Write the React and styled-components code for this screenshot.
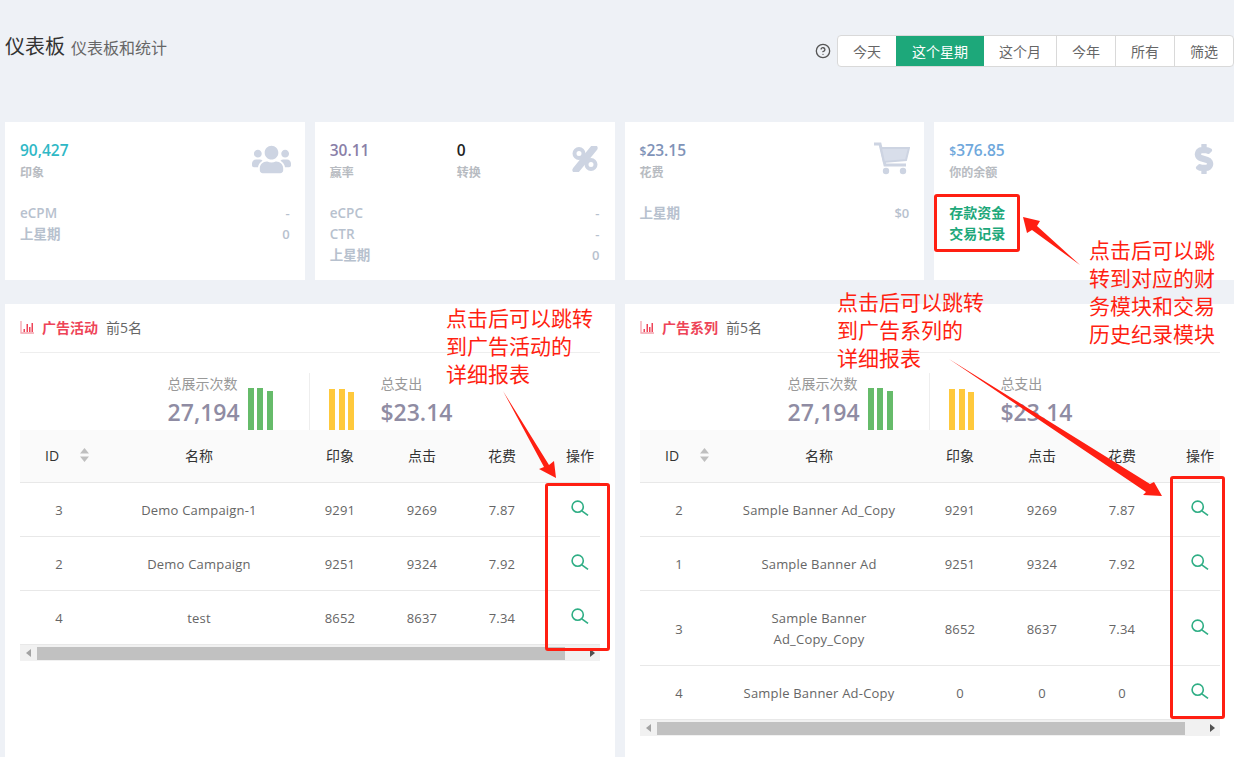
import React from 'react';
import styled, { createGlobalStyle } from 'styled-components';
import { FaUsers, FaDollarSign } from 'react-icons/fa';

const GlobalStyle = createGlobalStyle`
    html, body {
        margin: 0;
        padding: 0;
        background: #eef1f6;
    }
    body {
        font-family: "Open Sans", "Noto Sans CJK SC", sans-serif;
        font-size: 13px;
        color: #666;
    }
`;

const Page = styled.div`
    position: relative;
    box-sizing: border-box;
    width: 1234px;
    height: 757px;
    padding-left: 5px;
    overflow: hidden;
    background: #eef1f6;
`;

const PageHead = styled.div`
    display: flex;
    align-items: flex-start;
    justify-content: space-between;
    height: 32px;
    padding-top: 35px;
    margin-bottom: 55px;
`;

const Title = styled.h1`
    margin: 0;
    font-size: 20px;
    font-weight: 400;
    color: #333;
    line-height: 24px;
`;

const SubTitle = styled.small`
    margin-left: 6px;
    font-size: 16px;
    color: #666;
`;

const RangeBar = styled.div`
    display: flex;
    align-items: center;
`;

const HelpIcon = styled.svg`
    width: 16px;
    height: 16px;
    margin-right: 6px;
    color: #555;
`;

const RangeGroup = styled.div`
    display: flex;
    height: 32px;
    box-sizing: border-box;
    border: 1px solid #d9d9d9;
    border-radius: 4px;
    background: #fff;
    overflow: hidden;
`;

const RangeButton = styled.div`
    display: flex;
    align-items: center;
    justify-content: center;
    box-sizing: border-box;
    width: ${p => p.$width}px;
    margin-top: -1px;
    margin-bottom: -1px;
    font-size: 14px;
    color: ${p => (p.$active ? '#fff' : '#666')};
    background: ${p => (p.$active ? '#1da87a' : 'transparent')};
    border-left: ${p => (p.$divided ? '1px solid #d9d9d9' : 'none')};
`;

const CardRow = styled.div`
    display: grid;
    grid-template-columns: repeat(4, 1fr);
    gap: 10px;
    margin-bottom: 24px;
`;

const Card = styled.div`
    position: relative;
    box-sizing: border-box;
    height: 158px;
    padding: 18px 15px 0;
    background: #fff;
`;

const CardIcon = styled.div`
    position: absolute;
    top: ${p => p.$top}px;
    right: ${p => p.$right}px;
    display: flex;
    color: #cdd4e2;
`;

const MetricRow = styled.div`
    display: flex;
    height: 44px;
    margin-bottom: 19px;
`;

const Metric = styled.div`
    width: 127px;
`;

const MetricValue = styled.div`
    height: 22px;
    overflow: visible;
    font-size: 15.5px;
    font-weight: 600;
    line-height: 20px;
    color: ${p => p.$color};
`;

const Currency = styled.span`
    font-size: 12px;
`;

const MetricLabel = styled.div`
    font-size: 12px;
    font-weight: 700;
    line-height: 22px;
    color: #b7bbc1;
`;

const InfoRow = styled.div`
    display: flex;
    justify-content: space-between;
    font-size: 13px;
    font-weight: 600;
    line-height: 21px;
    color: #b7c1ce;
`;

const InfoLabel = styled.span`
    font-size: 13.5px;
`;

const CardLinks = styled.div`
    margin-top: -1px;
`;

const CardLink = styled.div`
    font-size: 14px;
    font-weight: 700;
    line-height: 21px;
    color: #1da87a;
`;

const PanelRow = styled.div`
    display: grid;
    grid-template-columns: repeat(2, 1fr);
    gap: 10px;
`;

const Panel = styled.div`
    box-sizing: border-box;
    height: 460px;
    padding: 0 15px;
    background: #fff;
`;

const PanelHead = styled.div`
    display: flex;
    align-items: center;
    height: 46px;
    padding-bottom: 2px;
    border-bottom: 1px solid #eee;
`;

const PanelIcon = styled.svg`
    width: 14px;
    height: 13px;
    margin-right: 8px;
`;

const PanelTitle = styled.span`
    font-size: 14px;
    font-weight: 700;
    color: #ee4458;
`;

const PanelNote = styled.span`
    margin-left: 8px;
    font-size: 14px;
    color: #666;
`;

const StatRow = styled.div`
    display: flex;
    height: 57px;
    margin-top: 20px;
`;

const StatLeft = styled.div`
    display: flex;
    align-items: flex-end;
    justify-content: flex-end;
    box-sizing: border-box;
    width: 290px;
    padding-right: 36px;
    gap: 8px;
    border-right: 1px solid #eee;
`;

const StatRight = styled.div`
    display: flex;
    align-items: flex-end;
    padding-left: 19px;
    gap: 26px;
`;

const StatText = styled.div`
    display: flex;
    flex-direction: column;
`;

const StatLabel = styled.span`
    font-size: 14px;
    line-height: 22px;
    color: #999;
`;

const StatValue = styled.span`
    font-size: 23px;
    font-weight: 600;
    line-height: 35px;
    color: #8f8ca3;
`;

const Bars = styled.div`
    display: flex;
    align-items: flex-end;
    gap: 3.7px;
`;

const Bar = styled.div`
    width: 6px;
    height: ${p => p.$height}px;
    background: ${p => p.$color};
`;

const TableWrap = styled.div`
    width: 580px;
    overflow: hidden;
`;

const Table = styled.table`
    width: 600px;
    table-layout: fixed;
    border-collapse: separate;
    border-spacing: 0;
`;

const HeadCell = styled.th`
    height: 50px;
    padding: 0 0 2px;
    font-size: 14px;
    font-weight: 400;
    color: #333;
    text-align: center;
    background: #fafafa;
    border-bottom: 1px solid #e8e8e8;
`;

const IdHead = styled.div`
    display: flex;
    align-items: center;
    padding-left: 25px;
    gap: 21px;
`;

const SortIcon = styled.svg`
    width: 9px;
    height: 14px;
`;

const Cell = styled.td`
    padding: 17px 20px 15px;
    font-size: 13px;
    line-height: 21px;
    letter-spacing: 0.2px;
    color: #666;
    text-align: center;
    border-bottom: 1px solid #e8e8e8;
`;

const SearchIcon = styled.svg`
    display: block;
    width: 18px;
    height: 16px;
    margin: 0 auto 5px;
`;

const ScrollBar = styled.div`
    display: flex;
    align-items: center;
    height: 16px;
    background: #f1f1f1;
`;

const ScrollThumb = styled.div`
    width: 528px;
    height: 13px;
    margin-left: 17px;
    background: #c1c1c1;
`;

const ScrollArrow = styled.div`
    position: relative;
    flex: 1;
    height: 16px;
    &::after {
        content: "";
        position: absolute;
        top: 4px;
        right: 5px;
        border-style: solid;
        border-width: 4px 0 4px 5px;
        border-color: transparent transparent transparent #505050;
    }
`;

const ScrollBack = styled.div`
    width: 0;
    position: relative;
    &::after {
        content: "";
        position: absolute;
        top: -4px;
        left: 6px;
        border-style: solid;
        border-width: 4px 5px 4px 0;
        border-color: transparent #a3a3a3 transparent transparent;
    }
`;

const ArrowLayer = styled.svg`
    position: absolute;
    top: 0;
    left: 0;
    width: 1234px;
    height: 757px;
    pointer-events: none;
`;

const MarkBox = styled.div`
    position: absolute;
    box-sizing: border-box;
    left: ${p => p.$x}px;
    top: ${p => p.$y}px;
    width: ${p => p.$w}px;
    height: ${p => p.$h}px;
    border: 3px solid #ff1f12;
    border-radius: 3px;
`;

const MarkNote = styled.div`
    position: absolute;
    left: ${p => p.$x}px;
    top: ${p => p.$y}px;
    font-family: "Noto Sans CJK SC", sans-serif;
    font-size: 21px;
    line-height: 28px;
    color: #ff1f12;
    white-space: nowrap;
`;

const ranges = [
    { label: '今天', width: 58 },
    { label: '这个星期', width: 88, active: true },
    { label: '这个月', width: 72 },
    { label: '今年', width: 59 },
    { label: '所有', width: 59 },
    { label: '筛选', width: 59 },
];

const campaigns = [
    { id: 3, name: 'Demo Campaign-1', views: 9291, clicks: 9269, cost: '7.87' },
    { id: 2, name: 'Demo Campaign', views: 9251, clicks: 9324, cost: '7.92' },
    { id: 4, name: 'test', views: 8652, clicks: 8637, cost: '7.34' },
];

const series = [
    { id: 2, name: 'Sample Banner Ad_Copy', views: 9291, clicks: 9269, cost: '7.87' },
    { id: 1, name: 'Sample Banner Ad', views: 9251, clicks: 9324, cost: '7.92' },
    { id: 3, name: 'Sample Banner Ad_Copy_Copy', views: 8652, clicks: 8637, cost: '7.34' },
    { id: 4, name: 'Sample Banner Ad-Copy', views: 0, clicks: 0, cost: '0' },
];

const CartIcon = () => (
    <svg width="37" height="33" viewBox="0 0 37 33">
        <path d="M1 2h6l5 21h21" fill="none" stroke="currentColor" strokeWidth="3" />
        <path d="M8 6h28l-3 12-22 2z" fill="#d8deea" stroke="currentColor" strokeWidth="2" />
        <circle cx="13" cy="29" r="3.2" fill="currentColor" />
        <circle cx="30" cy="29" r="3.2" fill="currentColor" />
    </svg>
);

const PercentIcon = () => (
    <svg width="26" height="26" viewBox="0 0 26 26">
        <path d="M22 2L4 24" fill="none" stroke="currentColor" strokeWidth="7" strokeLinecap="round" />
        <circle cx="7" cy="7.5" r="4.5" fill="#fff" stroke="currentColor" strokeWidth="4" />
        <circle cx="19" cy="18.5" r="4.5" fill="#fff" stroke="currentColor" strokeWidth="4" />
    </svg>
);

const ChartIcon = () => (
    <PanelIcon viewBox="0 0 14 13">
        <path d="M1 0v12h13" fill="none" stroke="#f4a3ad" strokeWidth="1.3" />
        <path d="M3.5 8h1.5v3H3.5zM6.5 3h1.5v8H6.5zM9 6h1.5v5H9zM11.5 2H13v9h-1.5z" fill="#ee4458" />
    </PanelIcon>
);

const StatBars = ({ color, heights }) => (
    <Bars>
        {heights.map((h, i) => <Bar key={i} $color={color} $height={h} />)}
    </Bars>
);

const DataTable = ({ rows }) => (
    <TableWrap>
        <Table>
            <colgroup>
                <col width="78" /><col width="202" /><col width="80" /><col width="84" /><col width="76" /><col width="80" />
            </colgroup>
            <thead>
                <tr>
                    <HeadCell>
                        <IdHead>
                            ID
                            <SortIcon viewBox="0 0 9 14">
                                <path d="M4.5 0L9 5.5H0zM4.5 14L0 8.5h9z" fill="#bfbfbf" />
                            </SortIcon>
                        </IdHead>
                    </HeadCell>
                    <HeadCell>名称</HeadCell>
                    <HeadCell>印象</HeadCell>
                    <HeadCell>点击</HeadCell>
                    <HeadCell>花费</HeadCell>
                    <HeadCell>操作</HeadCell>
                </tr>
            </thead>
            <tbody>
                {rows.map(r => (
                    <tr key={r.id}>
                        <Cell>{r.id}</Cell>
                        <Cell>{r.name}</Cell>
                        <Cell>{r.views}</Cell>
                        <Cell>{r.clicks}</Cell>
                        <Cell>{r.cost}</Cell>
                        <Cell>
                            <SearchIcon viewBox="0 0 18 16">
                                <circle cx="6.7" cy="6.7" r="5.6" fill="none" stroke="#2fae85" strokeWidth="1.6" />
                                <path d="M10.8 10.8L17 15.4" fill="none" stroke="#2fae85" strokeWidth="1.6" />
                            </SearchIcon>
                        </Cell>
                    </tr>
                ))}
            </tbody>
        </Table>
        <ScrollBar>
            <ScrollBack />
            <ScrollThumb />
            <ScrollArrow />
        </ScrollBar>
    </TableWrap>
);

const TopPanel = ({ title, rows }) => (
    <Panel>
        <PanelHead>
            <ChartIcon />
            <PanelTitle>{title}</PanelTitle>
            <PanelNote>前5名</PanelNote>
        </PanelHead>
        <StatRow>
            <StatLeft>
                <StatText>
                    <StatLabel>总展示次数</StatLabel>
                    <StatValue>27,194</StatValue>
                </StatText>
                <StatBars color="#66bb6a" heights={[42, 42, 39]} />
            </StatLeft>
            <StatRight>
                <StatBars color="#ffc93c" heights={[41, 41, 38]} />
                <StatText>
                    <StatLabel>总支出</StatLabel>
                    <StatValue>$23.14</StatValue>
                </StatText>
            </StatRight>
        </StatRow>
        <DataTable rows={rows} />
    </Panel>
);

const App = () => (
    <Page>
        <GlobalStyle />
        <PageHead>
            <Title>仪表板<SubTitle>仪表板和统计</SubTitle></Title>
            <RangeBar>
                <HelpIcon viewBox="0 0 24 24" fill="none" stroke="currentColor" strokeWidth="2" strokeLinecap="round" strokeLinejoin="round">
                    <circle cx="12" cy="12" r="10" />
                    <path d="M9.1 9a3 3 0 0 1 5.8 1c0 2-3 3-3 3" />
                    <path d="M12 17h.01" />
                </HelpIcon>
                <RangeGroup>
                    {ranges.map((r, i) => (
                        <RangeButton key={r.label} $width={r.width} $active={r.active} $divided={i > 2}>
                            {r.label}
                        </RangeButton>
                    ))}
                </RangeGroup>
            </RangeBar>
        </PageHead>

        <CardRow>
            <Card>
                <CardIcon $top={18} $right={14}><FaUsers size={39} /></CardIcon>
                <MetricRow>
                    <Metric>
                        <MetricValue $color="#2fb8c6">90,427</MetricValue>
                        <MetricLabel>印象</MetricLabel>
                    </Metric>
                </MetricRow>
                <InfoRow><InfoLabel>eCPM</InfoLabel><span>-</span></InfoRow>
                <InfoRow><InfoLabel>上星期</InfoLabel><span>0</span></InfoRow>
            </Card>
            <Card>
                <CardIcon $top={24} $right={17}><PercentIcon /></CardIcon>
                <MetricRow>
                    <Metric>
                        <MetricValue $color="#8a7fa8">30.11</MetricValue>
                        <MetricLabel>赢率</MetricLabel>
                    </Metric>
                    <Metric>
                        <MetricValue $color="#222">0</MetricValue>
                        <MetricLabel>转换</MetricLabel>
                    </Metric>
                </MetricRow>
                <InfoRow><InfoLabel>eCPC</InfoLabel><span>-</span></InfoRow>
                <InfoRow><InfoLabel>CTR</InfoLabel><span>-</span></InfoRow>
                <InfoRow><InfoLabel>上星期</InfoLabel><span>0</span></InfoRow>
            </Card>
            <Card>
                <CardIcon $top={20} $right={14}><CartIcon /></CardIcon>
                <MetricRow>
                    <Metric>
                        <MetricValue $color="#7f93b8"><Currency>$</Currency>23.15</MetricValue>
                        <MetricLabel>花费</MetricLabel>
                    </Metric>
                </MetricRow>
                <InfoRow><InfoLabel>上星期</InfoLabel><span>$0</span></InfoRow>
            </Card>
            <Card>
                <CardIcon $top={22} $right={15}><FaDollarSign size={30} stroke="currentColor" strokeWidth={28} /></CardIcon>
                <MetricRow>
                    <Metric>
                        <MetricValue $color="#6fa8dc"><Currency>$</Currency>376.85</MetricValue>
                        <MetricLabel>你的余额</MetricLabel>
                    </Metric>
                </MetricRow>
                <CardLinks>
                    <CardLink>存款资金</CardLink>
                    <CardLink>交易记录</CardLink>
                </CardLinks>
            </Card>
        </CardRow>

        <PanelRow>
            <TopPanel title="广告活动" rows={campaigns} />
            <TopPanel title="广告系列" rows={series} />
        </PanelRow>

        <MarkBox $x={934} $y={194} $w={86} $h={58} />
        <MarkBox $x={545} $y={483} $w={65} $h={168} />
        <MarkBox $x={1170} $y={476} $w={55} $h={243} />

        <MarkNote $x={446} $y={303}>点击后可以跳转<br />到广告活动的<br />详细报表</MarkNote>
        <MarkNote $x={837} $y={287}>点击后可以跳转<br />到广告系列的<br />详细报表</MarkNote>
        <MarkNote $x={1089} $y={235}>点击后可以跳<br />转到对应的财<br />务模块和交易<br />历史纪录模块</MarkNote>

        <ArrowLayer viewBox="0 0 1234 757">
            <polygon points="1080,265 1037,226 1040,221 1023,217 1027,233 1032,230" fill="#ff1f12" />
            <polygon points="503,391 549,465 554,461 556,478 539,469 544,467" fill="#ff1f12" />
            <polygon points="949,359 1150,484 1154,482 1162,496 1143,495 1146,492" fill="#ff1f12" />
        </ArrowLayer>
    </Page>
);

export default App;
